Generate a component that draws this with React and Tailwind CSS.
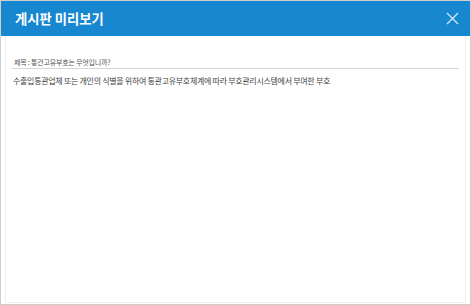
export default function App() {
  return (
    <div className="w-[471px] h-[305px] bg-white border border-[#cfcfcf] flex flex-col" style={{ fontFamily: '"Noto Sans CJK KR", "Noto Sans", sans-serif' }}>
      <div className="h-[35px] bg-[#1787cf] flex items-center justify-between pl-[14px] pr-[10px] shrink-0">
        <span className="text-white font-bold text-[13.3px] leading-none">게시판 미리보기</span>
        <svg width="13" height="13" viewBox="0 0 13 13" className="mr-[1px]">
          <path d="M1 1L12 12M12 1L1 12" stroke="#cfe6f6" strokeWidth="1.4" />
        </svg>
      </div>
      <div className="flex-1 mx-[4px] mb-[1px] border-x border-b border-[#eeeeee] px-[6px] pt-[21px]">
        <div className="text-[7px] tracking-[-0.2px] leading-[10px] text-[#555] border-b border-[#d6d6d6] pb-[1px] pl-[2px]">제목 : 통관고유부호는 무엇입니까?</div>
        <div className="text-[8px] tracking-[-0.3px] leading-[12px] text-[#444] mt-[6px] pl-[1px]">수출입통관업체 또는 개인의 식별을 위하여 통관고유부호체계에 따라 부호관리시스템에서 부여한 부호</div>
      </div>
    </div>
  );
}
